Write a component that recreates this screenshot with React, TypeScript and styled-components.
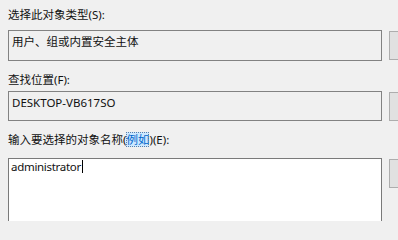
import styled, { createGlobalStyle } from "styled-components";

const GlobalStyle = createGlobalStyle`
  html, body {
    margin: 0;
    padding: 0;
    background: #f0f0f0;
    overflow: hidden;
  }
  body {
    font-family: "Segoe UI", "Noto Sans", "Noto Sans CJK SC", sans-serif;
    font-size: 11.5px;
    color: #111;
  }
`;

const Dialog = styled.div`
  box-sizing: border-box;
  width: 398px;
  height: 221px;
  padding: 7px 0 0 8px;
  display: flex;
  flex-direction: column;
  overflow: hidden;
`;

const Section = styled.section<{ $top: number }>`
  margin-top: ${(p) => p.$top}px;
  display: flex;
  flex-direction: column;
`;

const Label = styled.label<{ $gap: number }>`
  height: 16px;
  line-height: 16px;
  margin-bottom: ${(p) => p.$gap}px;
  white-space: nowrap;
`;

const ExampleLink = styled.a`
  color: #0066cc;
  background: #cce8ff;
  outline: 1px dotted #5a7fa8;
  outline-offset: -1px;
  text-decoration: none;
`;

const Row = styled.div`
  display: flex;
  gap: 7px;
  align-items: flex-start;
`;

const Field = styled.div<{ $height: number; $editable?: boolean }>`
  box-sizing: border-box;
  flex: none;
  width: 374px;
  height: ${(p) => p.$height}px;
  border: 1px solid ${(p) => (p.$editable ? "#7a7a7a" : "#828282")};
  background: ${(p) => (p.$editable ? "#fff" : "#f0f0f0")};
  padding: ${(p) => (p.$editable ? "0 2px" : "3px 3px")};
  line-height: 16px;
  letter-spacing: ${(p) => (p.$editable ? "-0.3px" : "0")};
  white-space: nowrap;
`;

const Caret = styled.span`
  display: inline-block;
  width: 1px;
  height: 13px;
  margin-left: 1px;
  vertical-align: -2px;
  background: #000;
`;

const SideButton = styled.button<{ $height: number }>`
  flex: none;
  width: 75px;
  height: ${(p) => p.$height}px;
  margin-top: 1px;
  border: 1px solid #adadad;
  background: #e1e1e1;
  padding: 0;
`;

export default function App() {
  return (
    <>
      <GlobalStyle />
      <Dialog>
        <Section $top={0}>
          <Label $gap={7}>选择此对象类型(S):</Label>
          <Row>
            <Field $height={31}>用户、组或内置安全主体</Field>
            <SideButton $height={29} />
          </Row>
        </Section>
        <Section $top={11}>
          <Label $gap={3}>查找位置(F):</Label>
          <Row>
            <Field $height={30}>DESKTOP-VB617SO</Field>
            <SideButton $height={29} />
          </Row>
        </Section>
        <Section $top={11}>
          <Label $gap={10}>
            输入要选择的对象名称(<ExampleLink>例如</ExampleLink>)(E):
          </Label>
          <Row>
            <Field $height={80} $editable>
              administrator
              <Caret />
            </Field>
            <SideButton $height={29} />
          </Row>
        </Section>
      </Dialog>
    </>
  );
}
